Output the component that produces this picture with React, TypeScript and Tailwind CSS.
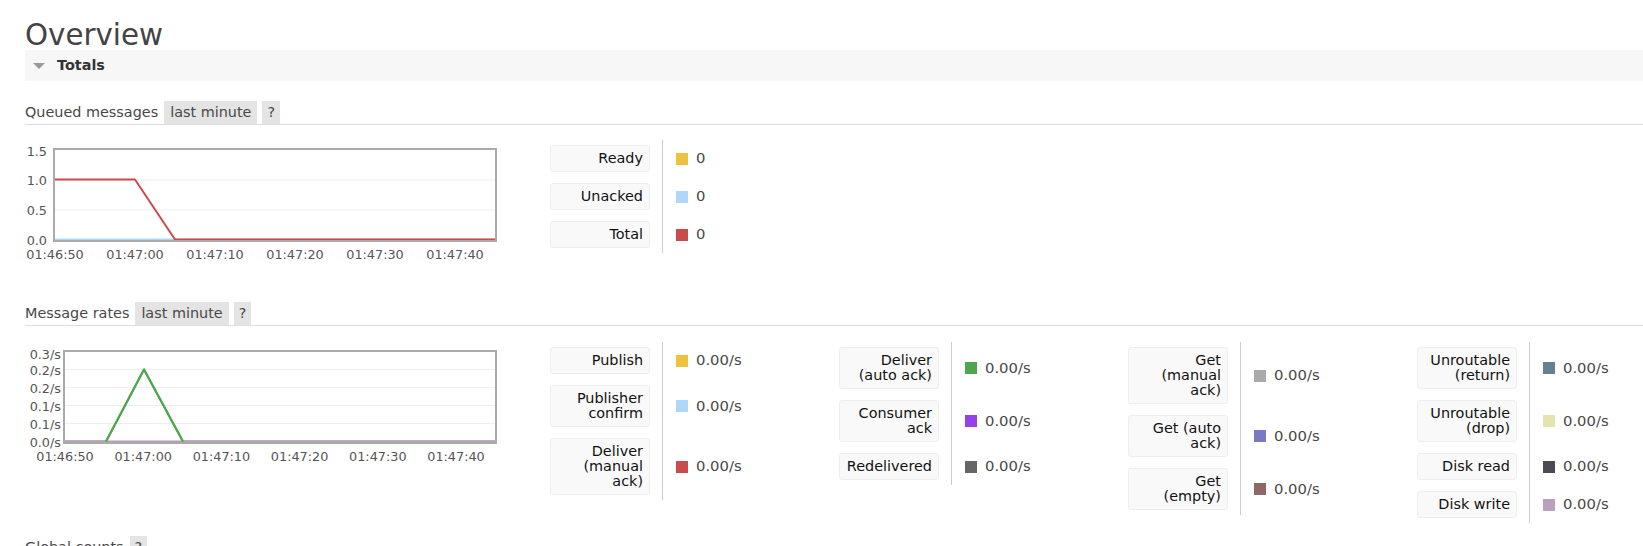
import React from 'react';

type Row = { lines: string[]; color: string; value: string };

const HEIGHTS: Record<number, string> = {
  1: 'h-[27px]',
  2: 'h-[42px]',
  3: 'h-[57px]',
};

const QUEUED: Row[] = [
  { lines: ['Ready'], color: '#edc240', value: '0' },
  { lines: ['Unacked'], color: '#afd8f8', value: '0' },
  { lines: ['Total'], color: '#cb4b4b', value: '0' },
];

const RATES: Row[][] = [
  [
    { lines: ['Publish'], color: '#edc240', value: '0.00/s' },
    { lines: ['Publisher', 'confirm'], color: '#afd8f8', value: '0.00/s' },
    { lines: ['Deliver', '(manual', 'ack)'], color: '#cb4b4b', value: '0.00/s' },
  ],
  [
    { lines: ['Deliver', '(auto ack)'], color: '#4da74d', value: '0.00/s' },
    { lines: ['Consumer', 'ack'], color: '#9440ed', value: '0.00/s' },
    { lines: ['Redelivered'], color: '#666666', value: '0.00/s' },
  ],
  [
    { lines: ['Get', '(manual', 'ack)'], color: '#aaaaaa', value: '0.00/s' },
    { lines: ['Get (auto', 'ack)'], color: '#7c79c3', value: '0.00/s' },
    { lines: ['Get', '(empty)'], color: '#8e6767', value: '0.00/s' },
  ],
  [
    { lines: ['Unroutable', '(return)'], color: '#67808e', value: '0.00/s' },
    { lines: ['Unroutable', '(drop)'], color: '#e5e4ae', value: '0.00/s' },
    { lines: ['Disk read'], color: '#4b4a55', value: '0.00/s' },
    { lines: ['Disk write'], color: '#bba0c1', value: '0.00/s' },
  ],
];

const TIMES = ['01:46:50', '01:47:00', '01:47:10', '01:47:20', '01:47:30', '01:47:40'];

function Heading({ title, range = true }: { title: string; range?: boolean }) {
  return (
    <div className="flex h-[24px] items-start border-b border-[#ddd]">
      <span className="mr-[6px] leading-[23px] text-[#484848]">{title}</span>
      {range && <span className="mr-[5px] h-[23px] bg-[#e4e4e4] px-[6px] leading-[23px] text-[#484848]">last minute</span>}
      <span className="h-[23px] bg-[#e4e4e4] px-[5px] leading-[23px] text-[#484848]">?</span>
    </div>
  );
}

function Legend({ rows }: { rows: Row[] }) {
  return (
    <div className="flex w-[289px] shrink-0">
      <div className="flex flex-col gap-[11px] py-[5px]">
        {rows.map((r) => (
          <div
            key={r.lines.join(' ')}
            className={`${HEIGHTS[r.lines.length]} w-[100px] whitespace-nowrap rounded-[3px] border border-[#eee] bg-[#f9f9f9] px-[6px] py-[5px] text-right leading-[15px] text-[#111]`}
          >
            {r.lines.map((l, i) => (
              <div key={i}>{l}</div>
            ))}
          </div>
        ))}
      </div>
      <div className="ml-[12px] w-px bg-[#ccc]" />
      <div className="ml-[13px] flex flex-col gap-[11px] py-[5px]">
        {rows.map((r) => (
          <div key={r.lines.join(' ')} className={`${HEIGHTS[r.lines.length]} flex items-center`}>
            <span className="h-3 w-3" style={{ backgroundColor: r.color }} />
            <span className="ml-2 text-[14.8px] text-[#484848]">{r.value}</span>
          </div>
        ))}
      </div>
    </div>
  );
}

const axisText = { fontFamily: '"DejaVu Sans", sans-serif', fontSize: 12.8, fill: '#545454' };

function QueuedChart() {
  return (
    <svg width="500" height="125" className="block">
      {[40, 70].map((y) => (
        <line key={y} x1="30" x2="470" y1={y} y2={y} stroke="#eeeeee" strokeWidth="1" />
      ))}
      <polyline points="30,99.5 470,99.5" fill="none" stroke="#afd8f8" strokeWidth="2" />
      <polyline points="30,39.5 110,39.5 150,99.5 470,99.5" fill="none" stroke="#cb4b4b" strokeWidth="2" strokeLinejoin="round" />
      <rect x="29" y="9" width="442" height="92" fill="none" stroke="#aaaaaa" strokeWidth="2" />
      {[
        ['1.5', 11.5],
        ['1.0', 40],
        ['0.5', 70],
        ['0.0', 100],
      ].map(([t, y]) => (
        <text key={t} x="22" y={y} textAnchor="end" dominantBaseline="central" style={axisText}>
          {t}
        </text>
      ))}
      {TIMES.map((t, i) => (
        <text key={t} x={30 + i * 80} y="119" textAnchor="middle" style={axisText}>
          {t}
        </text>
      ))}
    </svg>
  );
}

function RatesChart() {
  const ticks: [string, number][] = [
    ['0.3/s', 12],
    ['0.2/s', 28],
    ['0.2/s', 46],
    ['0.1/s', 64],
    ['0.1/s', 82],
    ['0.0/s', 100],
  ];
  return (
    <svg width="500" height="125" className="block">
      {[27.5, 45.5, 63.5, 81.5].map((y) => (
        <line key={y} x1="40" x2="470" y1={y} y2={y} stroke="#eeeeee" strokeWidth="1" />
      ))}
      <polyline points="40,99.5 81,99.5 119,27.5 158,99.5 470,99.5" fill="none" stroke="#4da74d" strokeWidth="2" strokeLinejoin="round" />
      <polyline points="40,99.5 470,99.5" fill="none" stroke="#b99ac0" strokeWidth="2" />
      <polyline points="81,99.5 119,27.5 158,99.5" fill="none" stroke="#4da74d" strokeWidth="2" strokeLinejoin="round" />
      <rect x="39" y="9" width="432" height="92" fill="none" stroke="#aaaaaa" strokeWidth="2" />
      {ticks.map(([t, y], i) => (
        <text key={i} x="36" y={y} textAnchor="end" dominantBaseline="central" style={axisText}>
          {t}
        </text>
      ))}
      {TIMES.map((t, i) => (
        <text key={t} x={40 + i * 78.2} y="119" textAnchor="middle" style={axisText}>
          {t}
        </text>
      ))}
    </svg>
  );
}

export default function App() {
  return (
    <div className="h-[546px] overflow-hidden bg-white pl-[25px] pt-[20px] font-['DejaVu_Sans',sans-serif] text-[14.4px] text-[#484848]">
      <h1 className="h-[30px] text-[29.3px] leading-[30px] text-[#444]">Overview</h1>

      <div className="flex h-[31px] items-center bg-[#f7f7f7]">
        <svg width="12" height="6" className="ml-[8px]">
          <polygon points="0,0 12,0 6,6" fill="#999" />
        </svg>
        <span className="ml-[12px] font-bold text-[#333]">Totals</span>
      </div>

      <div className="mt-[20px]">
        <Heading title="Queued messages" />
        <div className="mt-[15px] flex items-start">
          <div className="w-[525px] shrink-0">
            <QueuedChart />
          </div>
          <Legend rows={QUEUED} />
        </div>
      </div>

      <div className="mt-[37px]">
        <Heading title="Message rates" />
        <div className="mt-[16px] flex items-start">
          <div className="w-[525px] shrink-0">
            <RatesChart />
          </div>
          {RATES.map((col, i) => (
            <Legend key={i} rows={col} />
          ))}
        </div>
      </div>

      <div className="mt-[13px]">
        <Heading title="Global counts" range={false} />
      </div>
    </div>
  );
}
